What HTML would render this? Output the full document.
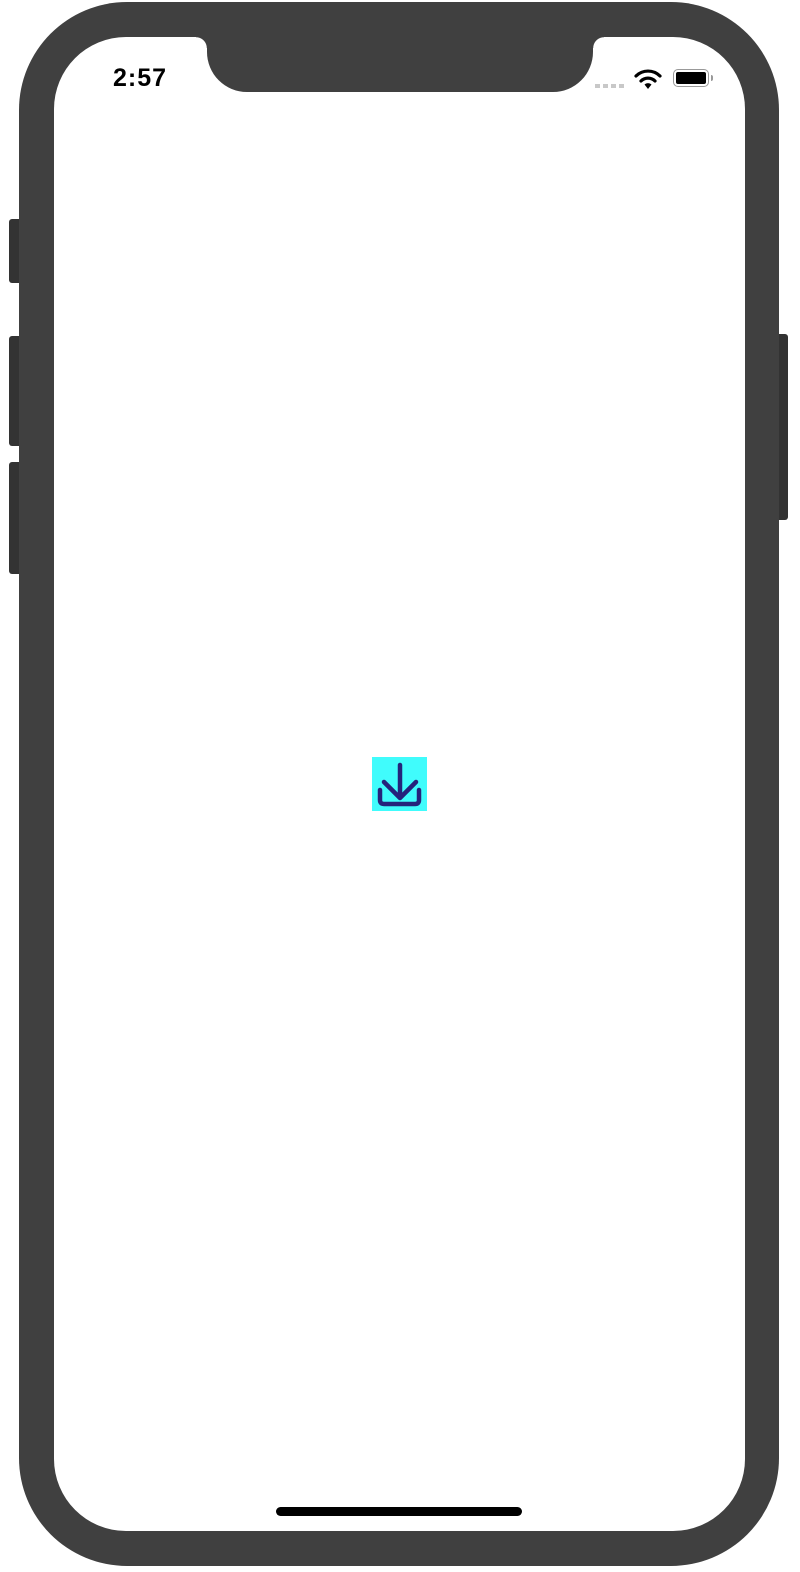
<!DOCTYPE html>
<html><head><style>
body{margin:0;width:800px;height:1572px;background:#fff;position:relative;overflow:hidden;font-family:"Liberation Sans",sans-serif}
.a{position:absolute}
</style></head><body>
<div class="a" style="left:9px;top:219px;width:14px;height:64px;background:#333;border-radius:3px"></div>
<div class="a" style="left:9px;top:336px;width:14px;height:110px;background:#333;border-radius:3px"></div>
<div class="a" style="left:9px;top:462px;width:14px;height:112px;background:#333;border-radius:3px"></div>
<div class="a" style="left:775px;top:334px;width:13px;height:186px;background:#333;border-radius:3px"></div>
<div class="a" style="left:19px;top:2px;width:760px;height:1564px;background:#404040;border-radius:108px"></div>
<div class="a" style="left:54px;top:37px;width:691px;height:1494px;background:#fff;border-radius:72px"></div>
<div class="a" style="left:207px;top:30px;width:386px;height:62px;background:#404040;border-radius:0 0 40px 40px"></div>
<div class="a" style="left:196px;top:37px;width:11px;height:11px;background:radial-gradient(circle at 0 100%,transparent 10.5px,#404040 11px)"></div>
<div class="a" style="left:593px;top:37px;width:11px;height:11px;background:radial-gradient(circle at 100% 100%,transparent 10.5px,#404040 11px)"></div>
<div class="a" style="left:113px;top:64px;font-size:25px;font-weight:bold;color:#000;letter-spacing:1px">2:57</div>
<div class="a" style="left:595px;top:84px;width:30px;height:4px;background:repeating-linear-gradient(90deg,#c8c8c8 0 5px,transparent 5px 8px)"></div>
<svg class="a" style="left:634px;top:68px" width="28" height="22" viewBox="0 0 28 22"><path d="M2 8a17 17 0 0 1 24 0" stroke="#000" stroke-width="3.2" fill="none" stroke-linecap="round"/><path d="M7 13a10 10 0 0 1 14 0" stroke="#000" stroke-width="3.2" fill="none" stroke-linecap="round"/><path d="M10.5 16.5L14 21L17.5 16.5a5 5 0 0 0-7 0z" fill="#000"/></svg>
<div class="a" style="left:673px;top:69px;width:36px;height:18px;border:1.5px solid #999;border-radius:5px;box-sizing:border-box"></div>
<div class="a" style="left:676px;top:72px;width:30px;height:12px;background:#000;border-radius:2px"></div>
<div class="a" style="left:711px;top:75px;width:2px;height:6px;background:#999;border-radius:0 2px 2px 0"></div>
<div class="a" style="left:372px;top:757px;width:55px;height:54px;background:#40fcfc"></div>
<svg class="a" style="left:372px;top:757px" width="55" height="54" viewBox="0 0 55 54"><g stroke="#25237b" stroke-width="4.5" fill="none" stroke-linecap="round" stroke-linejoin="round"><path d="M28 8V40M12 25L28 41L44 25"/><path d="M8 33V43Q8 47 12 47H43Q47 47 47 43V33"/></g></svg>
<div class="a" style="left:276px;top:1507px;width:246px;height:9px;background:#000;border-radius:5px"></div>
</body></html>
